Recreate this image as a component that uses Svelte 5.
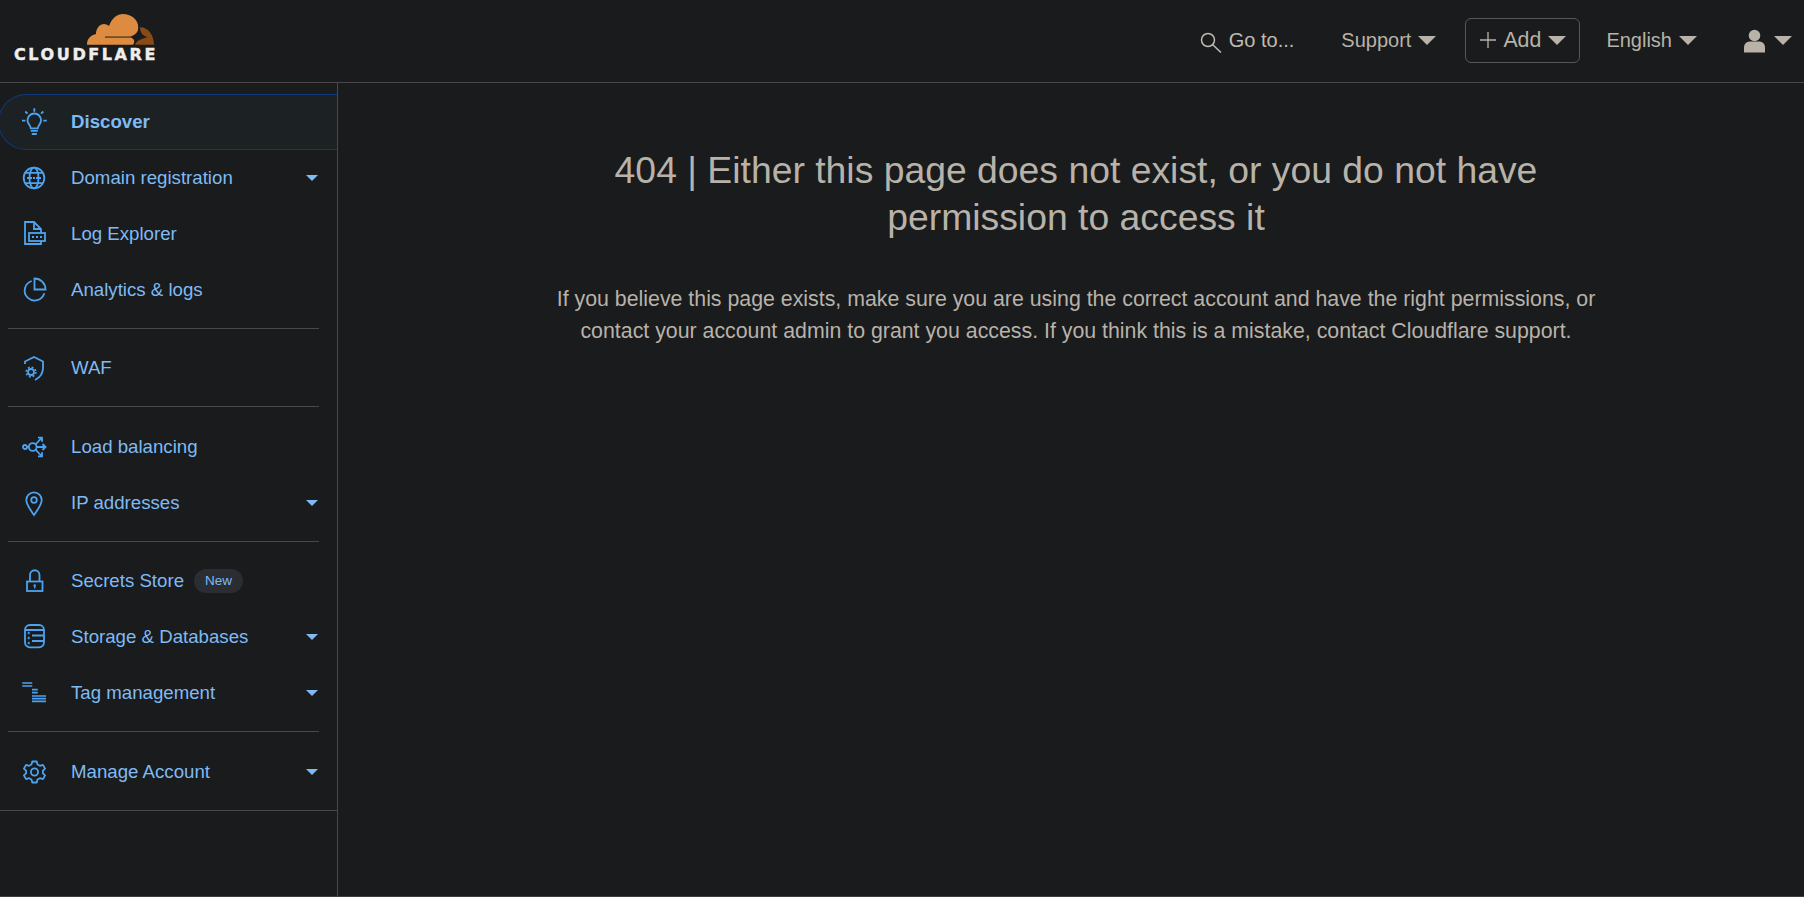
<script>
  const groups = [
    [
      { name: 'Discover', icon: 'bulb', active: true },
      { name: 'Domain registration', icon: 'globe', caret: true },
      { name: 'Log Explorer', icon: 'log' },
      { name: 'Analytics & logs', icon: 'pie' }
    ],
    [{ name: 'WAF', icon: 'shield' }],
    [
      { name: 'Load balancing', icon: 'balance' },
      { name: 'IP addresses', icon: 'pin', caret: true }
    ],
    [
      { name: 'Secrets Store', icon: 'lock', badge: 'New' },
      { name: 'Storage & Databases', icon: 'db', caret: true },
      { name: 'Tag management', icon: 'tag', caret: true }
    ],
    [{ name: 'Manage Account', icon: 'gear', caret: true }]
  ];
</script>

{#snippet navIcon(name)}
  <svg class="nav-icon" viewBox="0 0 26 30" fill="none" stroke="currentColor" stroke-width="1.8">
    {#if name === 'bulb'}
      <path d="M13.300 1.300v3.400M4.300 4.500l2.200 2.200M22.300 4.500l-2.200 2.200M1 13.700h3.400M22.300 13.700h3.400" />
      <path d="M9.800 21.300c0-3-3.300-4.300-3.300-8a6.800 6.800 0 0 1 13.600 0c0 3.700-3.300 5-3.300 8z" />
      <path d="M9.800 23.800h7M10.800 27h5" />
    {:else if name === 'globe'}
      <circle cx="13" cy="15" r="10.300" />
      <ellipse cx="13" cy="15" rx="4.500" ry="10.300" />
      <path d="M4 9.800h18M4 20.200h18" />
      <path d="M6 15h14" stroke-dasharray="2 1" />
    {:else if name === 'log'}
      <path d="M20 14v-4l-7-7H4v22h16v-3" />
      <path d="M13 3v7h7" />
      <rect x="8" y="14" width="16" height="8" />
      <path d="M11 18h2M15 18h2M19 18h2" />
    {:else if name === 'pie'}
      <path d="M10.700 6A10 10 0 1 0 23.300 18.300" />
      <path d="M13.500 3.500V14.500H24.500A11 11 0 0 0 13.500 3.500z" />
    {:else if name === 'shield'}
      <path d="M4 11V8.500L13 4l9 4.500V15c0 5-3 9.500-8 12" />
      <circle cx="10" cy="19" r="3" />
      <circle cx="10" cy="19" r="4.800" stroke-width="1.700" stroke-dasharray="1.900 1.870" />
    {:else if name === 'balance'}
      <circle cx="4" cy="15" r="2" />
      <circle cx="11.700" cy="15" r="3.900" />
      <path d="M6 15h2M14.500 12.500L20.500 6M15.600 15h8.400M14.500 17.500L20.500 24" />
      <path d="M17 5.700h4v4M21.500 12l3 3-3 3M17 24.300h4v-4" />
    {:else if name === 'pin'}
      <path d="M13 27c-3-4.500-7.700-10-7.700-15a7.700 7.700 0 0 1 15.400 0c0 5-4.700 10.500-7.700 15z" />
      <circle cx="13" cy="12" r="2.800" />
    {:else if name === 'lock'}
      <rect x="6" y="15.500" width="15.500" height="9.500" />
      <path d="M9 15.500V9a4.700 4.700 0 0 1 9.500 0v6.500" />
      <circle cx="13.700" cy="19.500" r="1.200" fill="currentColor" stroke="none" />
      <path d="M13.700 19.500v3" stroke-width="1.300" />
    {:else if name === 'db'}
      <rect x="4" y="3" width="19" height="22.300" rx="5" />
      <path d="M4 8h19M11 13.500h12M11 19h12" />
      <path d="M6.500 11h2.500M7.750 9.800v2.400M6.500 16h2.500M7.750 14.800v2.400M6.500 21h2.500M7.750 19.800v2.400" stroke-width="1.100" />
    {:else if name === 'tag'}
      <path d="M1.300 5h10M1.300 8h10M11 11.700h5.700M11 14.700h5.700M11 18h14M11 20.700h14M11 23.400h14" stroke-width="1.700" />
    {:else if name === 'gear'}
      <circle cx="13.500" cy="15" r="3.600" />
      <path stroke-linejoin="round" d="M11.300 4.500h4.400l.8 3 2.400 1.300 3-.9 2.200 3.700-2.200 2.100v2.600l2.200 2.100-2.200 3.700-3-.9-2.400 1.300-.8 3h-4.400l-.8-3-2.400-1.300-3 .9-2.200-3.700 2.200-2.100v-2.600l-2.200-2.100 2.200-3.700 3 .9 2.400-1.300z" />
    {/if}
  </svg>
{/snippet}

<div class="page">
  <header class="topbar">
    <a class="logo" href="#top">
      <svg class="cloud" viewBox="0 0 68 31">
        <path fill="#de8b42" d="M0 30.700C0 26 2 22 9 20C9 14 13 10 17 10C19 10 21 11 22 12C25 4 30 0 36 0C44 0 50 5 51 11C52 17 50 20 43 23C48 25 48 28 46 30.700z" />
        <path fill="#6a4522" d="M18 22.300h26v1.600H18z" />
        <path fill="#8a4a16" d="M53 13.300C61 13 67 21 67 30.700H48C49 27 56 24 61 23.300C56 22 53 19 53 13.300z" />
      </svg>
      <span class="wordmark">CLOUDFLARE</span>
    </a>
    <nav class="top-nav">
      <button class="top-item goto">
        <svg class="search" viewBox="0 0 22 22" fill="none" stroke="currentColor" stroke-width="1.500">
          <circle cx="8" cy="9" r="6.500" />
          <path d="M12.500 13.500L21 21.500" />
        </svg>
        Go to...
      </button>
      <button class="top-item support">Support <i class="tri"></i></button>
      <button class="top-item add">
        <svg class="plus" viewBox="0 0 18 18" stroke="currentColor" stroke-width="1.500"><path d="M9 0v18M0 9h18" /></svg>
        Add <i class="tri"></i>
      </button>
      <button class="top-item lang">English <i class="tri"></i></button>
      <button class="top-item user">
        <svg class="user-icon" viewBox="0 0 21 24" fill="currentColor">
          <circle cx="10.500" cy="6.500" r="5.800" />
          <path d="M0 23.500v-5c0-4 3-6 6-6h9c3 0 6 2 6 6v5z" />
        </svg>
        <i class="tri"></i>
      </button>
    </nav>
  </header>

  <div class="body">
    <aside class="sidebar">
      {#each groups as group}
        <ul class="group">
          {#each group as item}
            <li class="row" class:active={item.active}>
              {@render navIcon(item.icon)}
              <span class="label">{item.name}</span>
              {#if item.badge}<span class="badge">{item.badge}</span>{/if}
              {#if item.caret}<i class="caret"></i>{/if}
            </li>
          {/each}
        </ul>
      {/each}
    </aside>
    <main class="content">
      <h1>404 | Either this page does not exist, or you do not have permission to access it</h1>
      <p>If you believe this page exists, make sure you are using the correct account and have the right permissions, or contact your account admin to grant you access. If you think this is a mistake, contact Cloudflare support.</p>
    </main>
  </div>
</div>

<style>
  :global(body) {
    background: #191b1d;
    font-family: "Liberation Sans", Arial, sans-serif;
  }
  .page {
    height: 897px;
    display: flex;
    flex-direction: column;
    overflow: hidden;
    box-sizing: border-box;
    border-bottom: 1px solid #3d3f42;
  }
  .topbar {
    flex: none;
    height: 83px;
    box-sizing: border-box;
    border-bottom: 1px solid #46484a;
    display: flex;
    justify-content: space-between;
    align-items: flex-start;
  }
  .logo {
    position: relative;
    display: block;
    width: 170px;
    height: 66px;
    text-decoration: none;
  }
  .cloud {
    position: absolute;
    left: 87px;
    top: 14px;
    width: 68px;
    height: 31px;
  }
  .wordmark {
    position: absolute;
    left: 14px;
    top: 46px;
    font-family: "DejaVu Sans", sans-serif;
    font-weight: 700;
    font-size: 15px;
    line-height: 19px;
    letter-spacing: 2.4px;
    color: #eeeeee;
    white-space: nowrap;
    transform: scaleX(1.07);
    transform-origin: left center;
    -webkit-text-stroke: 0.4px #eeeeee;
  }
  .top-nav {
    display: flex;
    align-items: center;
    height: 45px;
    margin-top: 18px;
    padding-right: 12px;
  }
  .top-item {
    display: flex;
    align-items: center;
    height: 100%;
    box-sizing: border-box;
    background: none;
    border: none;
    padding: 0;
    font: inherit;
    font-size: 20px;
    color: #b8b2a8;
  }
  .goto {
    gap: 7px;
    margin-right: 47px;
    color: #c0bbb2;
  }
  .search {
    width: 22px;
    height: 22px;
    margin-top: 3px;
  }
  .support {
    margin-right: 29px;
    gap: 7px;
  }
  .add {
    width: 115px;
    border: 1px solid #55585b;
    border-radius: 6px;
    padding: 0 0 1px 14px;
    gap: 7px;
    margin-right: 26px;
    font-size: 21.330px;
  }
  .plus {
    width: 16px;
    height: 16px;
  }
  .lang {
    gap: 7px;
    margin-right: 47px;
  }
  .user {
    gap: 9px;
  }
  .user-icon {
    width: 21px;
    height: 24px;
  }
  .tri {
    display: block;
    width: 0;
    height: 0;
    border-left: 9px solid transparent;
    border-right: 9px solid transparent;
    border-top: 9px solid #b8b2a8;
  }
  .body {
    flex: 1;
    display: flex;
    min-height: 0;
  }
  .sidebar {
    flex: none;
    width: 338px;
    box-sizing: border-box;
    border-right: 1px solid #46484a;
    overflow: hidden;
    padding-top: 11px;
  }
  .group {
    list-style: none;
    margin: 0 0 11.400px;
    padding: 0 0 11px;
    position: relative;
  }
  .group::after {
    content: '';
    position: absolute;
    left: 8px;
    right: 18px;
    bottom: 0;
    height: 1px;
    background: #46484a;
  }
  .group:last-child::after {
    left: 0;
    right: 0;
  }
  .row {
    height: 56px;
    box-sizing: border-box;
    display: flex;
    align-items: center;
    padding-left: 21px;
    color: #7fbaf3;
    font-size: 18.67px;
  }
  .row.active {
    margin-left: -2px;
    padding-left: 22px;
    border: 1px solid #0d3a7c;
    border-right: none;
    border-radius: 28px 0 0 28px;
    background: #1c2124;
    font-weight: 700;
  }
  .nav-icon {
    flex: none;
    width: 26px;
    height: 30px;
    margin-right: 24px;
    color: #4da3f0;
  }
  .badge {
    margin-left: 10px;
    height: 24px;
    padding: 0 11px;
    border-radius: 12px;
    background: #2a2e33;
    font-size: 13.500px;
    line-height: 24px;
  }
  .caret {
    margin-left: auto;
    margin-right: 19px;
    width: 0;
    height: 0;
    border-left: 6px solid transparent;
    border-right: 6px solid transparent;
    border-top: 6px solid #7fbaf3;
  }
  .content {
    flex: 1;
    display: flex;
    flex-direction: column;
    align-items: center;
    padding: 64px 0 0 10px;
    color: #b8b2a8;
    text-align: center;
  }
  h1 {
    width: 1060px;
    margin: 0 0 42px;
    font-size: 37.33px;
    line-height: 47px;
    font-weight: 400;
  }
  p {
    width: 1060px;
    margin: 0;
    font-size: 21.33px;
    line-height: 32px;
  }
</style>
